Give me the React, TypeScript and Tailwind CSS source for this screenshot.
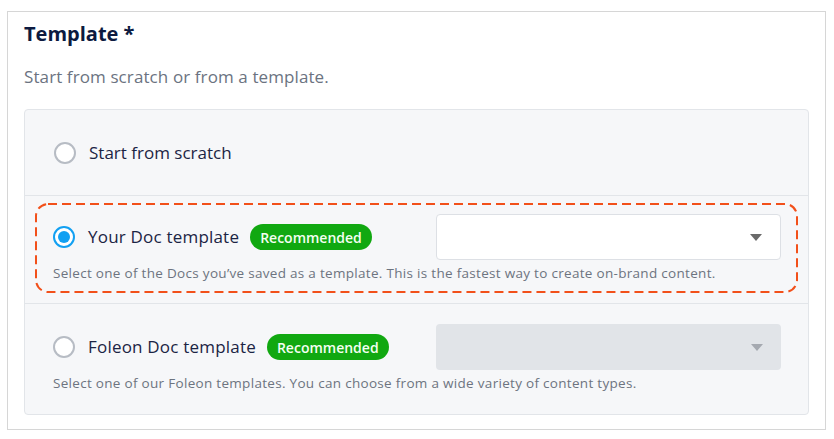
import React from "react";

const font = { fontFamily: "'Open Sans', Lato, Arial, sans-serif" };

function Radio({ checked }: { checked?: boolean }) {
  if (checked) {
    return (
      <span className="flex h-[22px] w-[22px] shrink-0 items-center justify-center rounded-full border-2 border-[#12a0f2] bg-white">
        <span className="h-[12px] w-[12px] rounded-full bg-[#12a0f2]" />
      </span>
    );
  }
  return <span className="h-[22px] w-[22px] shrink-0 rounded-full border-2 border-[#b7bcc4] bg-white" />;
}

function Badge() {
  return (
    <span className="flex h-[26px] items-center rounded-full bg-[#11a811] px-[10px] text-[14px] font-semibold text-[#f4fff2]">
      Recommended
    </span>
  );
}

function Caret({ color }: { color: string }) {
  return (
    <svg width="12" height="7" viewBox="0 0 12 7" className="shrink-0">
      <path d="M0 0 L12 0 L6 7 Z" fill={color} />
    </svg>
  );
}

function Select({ disabled }: { disabled?: boolean }) {
  return (
    <div
      className={`ml-auto flex h-[46px] w-[345px] items-center justify-end rounded-[4px] pr-[18px] ${
        disabled ? "bg-[#e1e4e8]" : "border border-[#dde0e5] bg-white"
      }`}
    >
      <Caret color={disabled ? "#a5a9b0" : "#6a6a6a"} />
    </div>
  );
}

function OptionBody({
  label,
  desc,
  checked,
  disabled,
}: {
  label: string;
  desc: string;
  checked?: boolean;
  disabled?: boolean;
}) {
  return (
    <>
      <div className="flex items-center">
        <Radio checked={checked} />
        <span className="ml-[13px] text-[17px] tracking-[0.2px] text-[#1b2444]">{label}</span>
        <span className="ml-[11px]">
          <Badge />
        </span>
        <Select disabled={disabled} />
      </div>
      <p className="mt-[4px] text-[13.5px] leading-[18px] tracking-[0.3px] text-[#6d7480]">{desc}</p>
    </>
  );
}

export default function App() {
  return (
    <div className="min-h-screen bg-white pl-[7px] pt-[11px]" style={font}>
      <div className="h-[419px] w-[819px] border border-[#d6d6d6] bg-white px-4 pt-[8px]">
        <h2 className="text-[20px] font-bold leading-[28px] text-[#0c1a40]">Template *</h2>
        <p className="mt-[17px] text-[17px] leading-[24px] tracking-[0.1px] text-[#6b7381]">
          Start from scratch or from a template.
        </p>

        <div className="mt-[20px] rounded-[4px] border border-[#e2e5e9] bg-[#f6f7f9]">
          {/* Row 1 */}
          <div className="flex h-[85px] items-center pl-[29px]">
            <Radio />
            <span className="ml-[13px] text-[17px] text-[#1b2444]">Start from scratch</span>
          </div>

          {/* Row 2 — focused */}
          <div className="border-t border-[#e2e5e9] pb-[11px] pl-[10px] pr-[11px] pt-[7px]">
            <div className="relative pb-[10px] pl-[18px] pr-[16px] pt-[11px]">
              <svg className="pointer-events-none absolute inset-0" width="763" height="90" aria-hidden>
                <rect
                  x="1"
                  y="1"
                  width="761"
                  height="88"
                  rx="12"
                  fill="none"
                  stroke="#f2501a"
                  strokeWidth="2"
                  strokeDasharray="9 5"
                />
              </svg>
              <OptionBody
                checked
                label="Your Doc template"
                desc="Select one of the Docs you’ve saved as a template. This is the fastest way to create on-brand content."
              />
            </div>
          </div>

          {/* Row 3 */}
          <div className="border-t border-[#e2e5e9] pb-[22px] pl-[28px] pr-[27px] pt-[20px]">
            <OptionBody
              disabled
              label="Foleon Doc template"
              desc="Select one of our Foleon templates. You can choose from a wide variety of content types."
            />
          </div>
        </div>
      </div>
    </div>
  );
}
